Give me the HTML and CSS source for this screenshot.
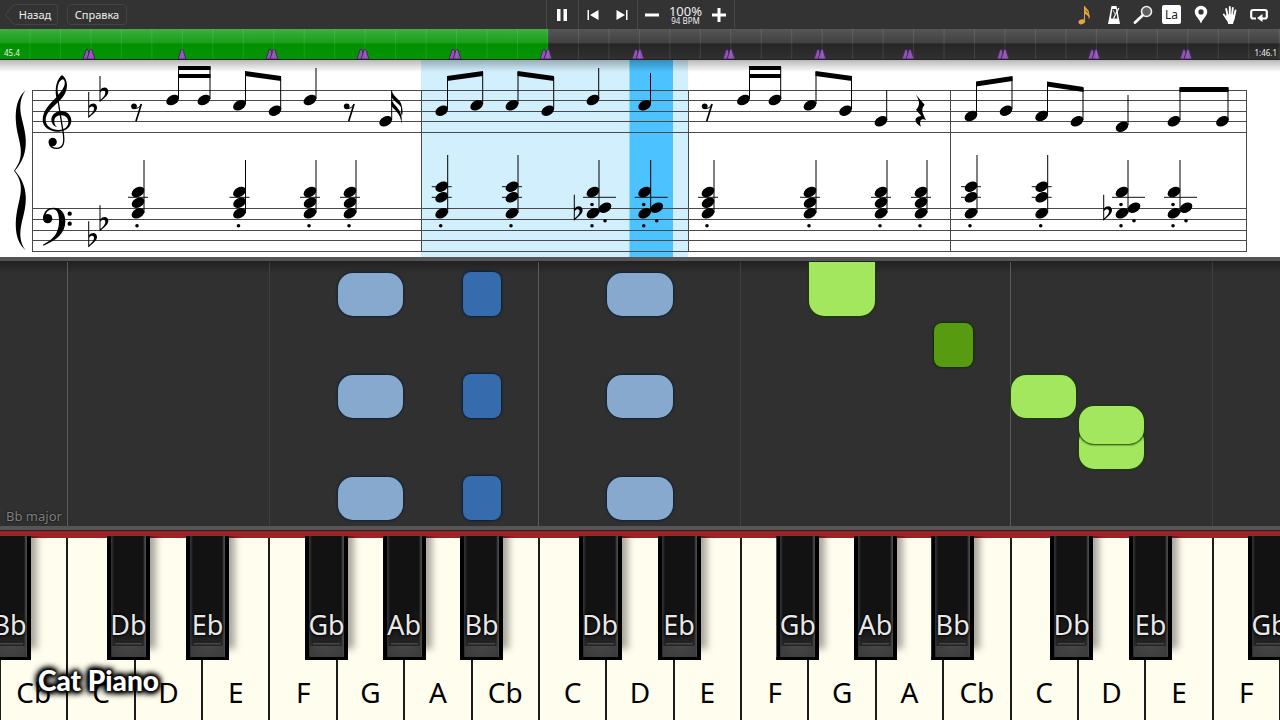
FILE: index.html
```html
<!DOCTYPE html>
<html lang="ru">
<head>
<meta charset="utf-8">
<meta name="viewport" content="width=device-width, initial-scale=1">
<title>Cat Piano</title>
<link rel="stylesheet" href="styles.css">
</head>
<body>
<div class="app">
  <header class="toolbar">
    <nav class="menu">
      <button class="menu-btn back" type="button"><svg class="back-shape" viewBox="0 0 52 22" preserveAspectRatio="none" aria-hidden="true"><path d="M.5 11 7 2.500Q8.500 .5 11 .5H49.500Q51.500 .5 51.500 3V19Q51.500 21.500 49.500 21.500H11Q8.500 21.500 7 19.500Z"/></svg>Назад</button>
      <button class="menu-btn help" type="button">Справка</button>
    </nav>
    <div class="transport">
      <button class="tbtn pause" type="button" aria-label="Pause"><svg width="12" height="14" viewBox="0 0 12 14"><path d="M1 1h3.500v12H1zM7.500 1H11v12H7.500z"/></svg></button>
      <div class="steps">
        <button class="tbtn" type="button" aria-label="Previous"><svg width="12" height="12" viewBox="0 0 12 12"><path d="M.5 1H2v10H.5zM11.500 1v10L3 6z"/></svg></button>
        <button class="tbtn" type="button" aria-label="Next"><svg width="12" height="12" viewBox="0 0 12 12"><path d="M10 1h1.500v10H10zM.5 1v10L9 6z"/></svg></button>
      </div>
      <div class="tempo">
        <button class="tbtn" type="button" aria-label="Slower"><svg width="14" height="14" viewBox="0 0 14 14"><path d="M0 5.500h14v3H0z"/></svg></button>
        <div class="tempo-text"><span class="percent">100%</span><span class="bpm">94 BPM</span></div>
        <button class="tbtn" type="button" aria-label="Faster"><svg width="14" height="14" viewBox="0 0 14 14"><path d="M0 5.500h14v3H0zM5.500 0h3v14h-3z"/></svg></button>
      </div>
    </div>
    <div class="tools">
      <button class="tool" type="button" aria-label="Notes"><svg width="14" height="20" viewBox="0 0 14 20"><g fill="#e8a33c"><ellipse cx="3.800" cy="16.800" rx="3.400" ry="2.400" transform="rotate(-20 3.800 16.800)"/><path d="M6 1H7C7.500 3.500 12 5 11 9 12.500 11 11.800 13 10.500 14.500 11.200 11.500 9.500 10 7 9V16.500H6zM7 4.500C7.500 6.500 9.500 7 10.300 8.500 10.500 6.500 8 6 7 4.500z"/></g></svg></button>
      <button class="tool" type="button" aria-label="Metronome"><svg width="14" height="20" viewBox="0 0 14 20"><path d="M4.500 1h5L13 19H1z"/><path d="M5.300 4h3.700l1.400 9.500H3.900z" fill="#333"/><path d="M6.500 13.500 11.800 3" stroke="#fff" stroke-width="1.300"/><path d="M6 5 8.500 10" stroke="#ccc"/></svg></button>
      <button class="tool" type="button" aria-label="Zoom"><svg width="20" height="20" viewBox="0 0 20 20"><circle cx="13.500" cy="6.500" r="5" fill="#606060" stroke="#eee" stroke-width="1.600"/><path d="M9.500 10.500 2 17.500" stroke="#fff" stroke-width="2.800" stroke-linecap="round"/></svg></button>
      <button class="tool" type="button" aria-label="Note names"><span class="la">La</span></button>
      <button class="tool" type="button" aria-label="Marker"><svg width="14" height="20" viewBox="0 0 14 20"><path fill-rule="evenodd" d="M7 18.500C5.500 14 .8 11 .8 7A6.200 6.200 0 0 1 13.200 7C13.200 11 8.500 14 7 18.500zM7 4.300a2.600 2.600 0 1 0 0 5.200 2.600 2.600 0 0 0 0-5.200z"/></svg></button>
      <button class="tool" type="button" aria-label="Hands"><svg width="16" height="20" viewBox="0 0 16 20"><g fill="none" stroke="#fff" stroke-width="1.900" stroke-linecap="round"><path d="M5.700 11 4.200 4M7.800 10V2M10 10 10.800 3M12 12 13.500 5.500M5 14 1.800 9.500"/></g><path d="M4.500 9.500H12L13 12c-.3 3-1.500 4-2 7H6.200C6 16.500 4.500 15.500 3.500 13.500z"/></svg></button>
      <button class="tool" type="button" aria-label="Loop"><svg width="18" height="14" viewBox="0 0 18 14"><path d="M6 10.500H3.200Q1.200 10.500 1.200 8.500V4Q1.200 2 3.200 2H14.800Q16.800 2 16.800 4V8.500Q16.800 10.500 14.800 10.500H12" fill="none" stroke="#fff" stroke-width="2.200"/><path d="M12.500 6v8L7 10z"/></svg></button>
    </div>
  </header>

  <section class="timeline" aria-label="Timeline">
    <div class="played"></div>
    <svg class="markers" viewBox="0 0 1280 30" preserveAspectRatio="none" aria-hidden="true">
      <defs>
        <path id="mk" d="M-4 30-1 21Q0 19 1 21L4 30Z" fill="#8f55b5" stroke="#492661" stroke-width="1"/>
        <g id="mk2"><use href="#mk" x="-2"/><use href="#mk" x="2"/></g>
      </defs>
      <use href="#mk2" x="89"/><use href="#mk" x="182"/><use href="#mk2" x="272"/><use href="#mk2" x="363"/><use href="#mk2" x="455"/><use href="#mk2" x="546"/><use href="#mk2" x="638"/><use href="#mk2" x="729"/><use href="#mk2" x="820"/><use href="#mk2" x="908"/><use href="#mk2" x="1003"/><use href="#mk2" x="1094"/><use href="#mk2" x="1186"/>
    </svg>
    <span class="time">45.4</span>
    <span class="time">1:46.1</span>
  </section>

  <section class="score" aria-label="Score">
    <svg class="sheet" viewBox="0 60 1280 197" role="img" aria-label="Sheet music">
      <defs>
        <ellipse id="h" rx="6.800" ry="4.700" transform="rotate(-30)"/>
        <g id="flat" transform="scale(.3333)"><path fill-rule="evenodd" d="M-1.500-58H1.500V-17C8-26 25-26 25-11 25 0 10 10 0 20L-1.500 18ZM1.500-9V13C8 7 16 0 16-8 16-17 6-16 1.500-9Z"/></g>
        <g id="rest8" transform="scale(.3333)"><circle r="8.500"/><path d="M0 6Q14 9 22-7" fill="none" stroke="#000" stroke-width="3"/><path d="M22-7 6 45" stroke="#000" stroke-width="5"/></g>
        <g id="ca"><path d="M6 160V213" class="st"/><path d="M-10 197.300H10" class="ld"/><use href="#h" y="192"/><use href="#h" y="202.700"/><use href="#h" y="213.300"/><circle cx="-1" cy="225.700" r="1.800"/></g>
        <g id="cb"><path d="M6 155V213" class="st"/><path d="M-10 186.700H10M-10 197.300H10" class="ld"/><use href="#h" y="186.700"/><use href="#h" y="197.300"/><use href="#h" y="213.300"/><circle cx="-1" cy="225.700" r="1.800"/></g>
        <g id="cc"><path d="M6 160V213" class="st"/><path d="M-10 197.300H23" class="ld"/><use href="#h" y="192"/><use href="#h" y="213.300"/><use href="#h" x="12" y="207.700"/><circle cx="-1" cy="204.500" r="1.800"/><circle cx="-1" cy="225.700" r="1.800"/><circle cx="12" cy="220.700" r="1.800"/></g>
      </defs>
      <rect x="421" y="60" width="267" height="197" fill="#d2effd"/>
      <rect x="629.500" y="60" width="43.500" height="197" fill="#4cc2ff"/>
      <path class="staff" d="M32 90.500H1247M32 100.500H1247M32 111.500H1247M32 121.500H1247M32 132.500H1247M32 208.500H1247M32 219.500H1247M32 230.500H1247M32 240.500H1247M32 251.500H1247M32.500 90V252M421.500 90V252M688.500 90V252M950.500 90V252M1246.500 90V252"/>
      <g transform="translate(0 58) scale(.3333)">
        <path d="M77 97C59 120 58 150 65 180 73 215 97 280 45 338 97 396 73 460 65 495 58 526 59 554 77 577 38 545 46 480 54 445 63 405 72 375 42 338 72 300 63 270 54 230 46 195 38 130 77 97Z"/>
        <path fill-rule="evenodd" d="M186 51C172 62 163 88 169 118 150 137 128 158 128 186 128 208 150 222 176 221 200 220 214 205 214 187 213 170 200 159 184 159 166 160 154 171 154 185 155 197 161 205 172 208 165 202 162 196 163 188 164 177 173 172 184 172 197 172 205 181 205 193 205 208 192 216 176 216 155 216 138 205 137 186 137 166 157 148 175 132 192 116 201 100 201 80 200 67 195 57 186 51ZM189 64C196 68 196 80 190 89 186 97 180 104 175 110 170 92 174 68 189 64Z"/>
        <path d="M172 114 189 220C195 255 190 270 172 271 160 271 150 265 148 256" fill="none" stroke="#000" stroke-width="4"/>
        <circle cx="158" cy="252" r="12.500"/>
        <path d="M129 482C130 458 145 449 160 449 182 449 196 463 196 490 196 525 170 548 130 563L129 560C160 545 177 525 177 490 177 468 172 454 158 454 145 454 138 463 137 474Z"/>
        <circle cx="143" cy="482" r="14"/><circle cx="209" cy="467" r="6.500"/><circle cx="209" cy="497" r="6.500"/>
      </g>
      <use href="#flat" x="88.700" y="111.300"/><use href="#flat" x="100" y="95.300"/><use href="#flat" x="88.700" y="240.700"/><use href="#flat" x="100" y="224.700"/><use href="#flat" x="574.300" y="214"/><use href="#flat" x="1103.700" y="214"/>
      <use href="#rest8" x="134" y="106.300"/><use href="#rest8" x="346.700" y="106.300"/><use href="#rest8" x="704.700" y="106.300"/>
      <path transform="translate(690 58) scale(.3333)" d="M678 110 704 140C694 152 694 160 708 186 694 180 686 188 693 206 672 194 670 176 694 174L678 155C690 142 690 132 678 110Z"/>

      <path class="st" d="M178.500 67V99M210 67V99M245.500 72V104M280.700 77V109M316 68V99M391.700 90V120M447.500 77V109M482.700 72V104M518 72V104M553.700 77V109M598.700 68V99M650.500 73V104M749.500 67V99M780.700 67V99M816 72V104M851.500 77V109M886.700 90V120M976.500 82V115M1012 77V109M1047.500 82V115M1083 88V120M1128 95V125M1180 88V120M1228 88V120"/>
      <path d="M178 66H210.500V70H178ZM178 74H210.500V78H178ZM749 66H781V70H749ZM749 74H781V78H749ZM245 71 281 76V81L245 76ZM447 76 483 71V76L447 81ZM517.500 71 554 76V81L517.500 76ZM815.500 71 852 76V81L815.500 76ZM976 81.500 1012.500 76V81L976 86.500ZM1047 81.500 1083.500 87V92L1047 86.500ZM1179.500 87H1228.500V92H1179.500Z"/>
      <path d="M391.500 90C393 98 403 99 402 110 401 104 394 102 391.500 97ZM391.500 99C393 106 404 109 401.500 124 401 113 394 110 391.500 106ZM401 105Q403.500 110 402 116L401 113Z"/>
      <use href="#h" x="172.700" y="100"/><use href="#h" x="204" y="100"/><use href="#h" x="239.500" y="105.300"/><use href="#h" x="275" y="110.700"/><use href="#h" x="310" y="100"/><use href="#h" x="385.700" y="121.300"/>
      <use href="#h" x="441.700" y="110.700"/><use href="#h" x="476.700" y="105.300"/><use href="#h" x="512" y="105.300"/><use href="#h" x="547.700" y="110.700"/><use href="#h" x="593" y="100"/><use href="#h" x="644.700" y="105.300"/>
      <use href="#h" x="743.500" y="100"/><use href="#h" x="775" y="100"/><use href="#h" x="810" y="105.300"/><use href="#h" x="845.500" y="110.700"/><use href="#h" x="881" y="121.300"/>
      <use href="#h" x="971" y="116"/><use href="#h" x="1006" y="110.700"/><use href="#h" x="1041.700" y="116"/><use href="#h" x="1077" y="121.300"/><use href="#h" x="1122" y="126.700"/><use href="#h" x="1174" y="121.300"/><use href="#h" x="1222.500" y="121.300"/>

      <use href="#ca" x="138"/><use href="#ca" x="239.500"/><use href="#ca" x="310"/><use href="#ca" x="350"/>
      <use href="#cb" x="441.700"/><use href="#cb" x="512"/><use href="#cc" x="593"/><use href="#cc" x="644.700"/>
      <use href="#ca" x="708"/><use href="#ca" x="810"/><use href="#ca" x="881"/><use href="#ca" x="921"/>
      <use href="#cb" x="971"/><use href="#cb" x="1041.700"/><use href="#cc" x="1122"/><use href="#cc" x="1174"/>
    </svg>
  </section>

  <div class="divider"></div>

  <section class="roll" aria-label="Falling notes">
    <i class="guide" style="left:5.200%"></i><i class="guide soft" style="left:21%"></i><i class="guide" style="left:42.050%"></i><i class="guide soft" style="left:57.850%"></i><i class="guide" style="left:78.900%"></i><i class="guide soft" style="left:94.700%"></i>
    <i class="note blue" style="left:26.400%;top:11px"></i><i class="note blue" style="left:26.400%;top:113px"></i><i class="note blue" style="left:26.400%;top:215px"></i>
    <i class="note navy" style="left:36.170%;top:10px"></i><i class="note navy" style="left:36.170%;top:112px"></i><i class="note navy" style="left:36.170%;top:214px"></i>
    <i class="note blue" style="left:47.450%;top:11px"></i><i class="note blue" style="left:47.450%;top:113px"></i><i class="note blue" style="left:47.450%;top:215px"></i>
    <i class="note lime" style="left:63.240%;top:-14px;height:68px"></i>
    <i class="note green" style="left:73%;top:61px"></i>
    <i class="note lime" style="left:79%;top:113px"></i>
    <i class="note lime" style="left:84.280%;top:164px"></i>
    <i class="note lime" style="left:84.280%;top:144px;height:38px"></i>
    <span class="key-name">Bb major</span>
  </section>

  <div class="divider"></div>

  <section class="keyboard" aria-label="Piano">
    <div class="whites">
      <button type="button">Cb</button><button type="button">C</button><button type="button">D</button><button type="button">E</button><button type="button">F</button><button type="button">G</button><button type="button">A</button><button type="button">Cb</button><button type="button">C</button><button type="button">D</button><button type="button">E</button><button type="button">F</button><button type="button">G</button><button type="button">A</button><button type="button">Cb</button><button type="button">C</button><button type="button">D</button><button type="button">E</button><button type="button">F</button>
    </div>
    <button class="black" type="button" style="left:-0.940%">Bb</button>
    <button class="black" type="button" style="left:8.360%">Db</button>
    <button class="black" type="button" style="left:14.530%">Eb</button>
    <button class="black" type="button" style="left:23.830%">Gb</button>
    <button class="black" type="button" style="left:29.900%">Ab</button>
    <button class="black" type="button" style="left:35.940%">Bb</button>
    <button class="black" type="button" style="left:45.200%">Db</button>
    <button class="black" type="button" style="left:51.370%">Eb</button>
    <button class="black" type="button" style="left:60.650%">Gb</button>
    <button class="black" type="button" style="left:66.720%">Ab</button>
    <button class="black" type="button" style="left:72.750%">Bb</button>
    <button class="black" type="button" style="left:82.040%">Db</button>
    <button class="black" type="button" style="left:88.200%">Eb</button>
    <button class="black" type="button" style="left:97.500%">Gb</button>
    <span class="watermark">Cat Piano</span>
  </section>
</div>
</body>
</html>
```
FILE: styles.css
```css
* { box-sizing: border-box; }
body {
  margin: 0;
  background: #303030;
  font-family: "Noto Sans", "Open Sans", sans-serif;
}
button {
  margin: 0;
  padding: 0;
  border: 0;
  background: none;
  color: inherit;
  font: inherit;
}
svg { display: block; flex: none; }
.app {
  display: flex;
  flex-direction: column;
  min-height: 100vh;
  overflow: hidden;
}

/* Toolbar */
.toolbar {
  display: grid;
  grid-template-columns: 1fr auto 1fr;
  height: 29px;
  background: #333;
  color: #eee;
}
.menu {
  display: flex;
  align-items: center;
  gap: 9px;
  padding-left: 5px;
}
.menu-btn {
  position: relative;
  height: 21px;
  font-size: 11px;
  line-height: 20px;
}
.back { width: 53px; padding-left: 7px; }
.back-shape {
  position: absolute;
  inset: 0;
  width: 100%;
  height: 100%;
  fill: none;
  stroke: #444;
}
.help {
  width: 60px;
  border: 1px solid #444;
  border-radius: 4px;
}
.transport {
  display: flex;
  border: solid #484848;
  border-width: 0 1px;
}
.tbtn {
  display: flex;
  align-items: center;
  justify-content: center;
  width: 29px;
}
.tbtn svg, .tool svg { fill: #fff; }
.pause { width: 31px; }
.steps {
  display: flex;
  border: solid #484848;
  border-width: 0 1px;
}
.tempo { display: flex; }
.tempo-text {
  display: flex;
  flex-direction: column;
  align-items: center;
  width: 38px;
  padding-top: 4px;
}
.percent { font-size: 13px; line-height: 14px; }
.bpm { font-size: 8px; line-height: 6px; }
.tools {
  display: flex;
  justify-content: flex-end;
  padding-right: 7px;
}
.tool {
  display: flex;
  align-items: center;
  justify-content: center;
  width: 29px;
}
.la {
  width: 19px;
  height: 19px;
  border-radius: 2px;
  background: #fff;
  color: #222;
  font-size: 12px;
  line-height: 20px;
}

/* Timeline */
.timeline {
  position: relative;
  display: flex;
  justify-content: space-between;
  align-items: flex-end;
  height: 31px;
  padding: 0 3px 1px 4px;
  border-bottom: 1px solid #222;
  background: linear-gradient(#555, #424242 45%, #262626 50%, #303030);
  color: #eee;
}
.timeline::after {
  content: "";
  position: absolute;
  inset: 0;
  background: linear-gradient(90deg, transparent calc(100% - 1px), rgba(255, 255, 255, .1) 0) 0 0 / calc(100% / 42) 100%;
}
.played {
  position: absolute;
  inset: 0 auto 0 0;
  width: 42.8%;
  background: linear-gradient(#3fae3f, #18a018 45%, #009000 52%, #049504);
}
.markers {
  position: absolute;
  inset: 0;
  width: 100%;
  height: 100%;
}
.time { position: relative; font-size: 8px; line-height: 11px; }

/* Score */
.score {
  position: relative;
  background: #fff;
}
.score::after {
  content: "";
  position: absolute;
  inset: 0 0 auto;
  height: 12px;
  background: linear-gradient(rgba(0, 0, 0, .28), transparent);
}
.sheet { width: 100%; height: auto; }
.staff { fill: none; stroke: #4a4a4a; stroke-width: 1; }
.st { fill: none; stroke: #000; stroke-width: 1; }
.ld { fill: none; stroke: #111; stroke-width: 1; }
.divider {
  position: relative;
  z-index: 1;
  height: 5px;
  border-bottom: 1px solid #222;
  background: #555;
}

/* Falling notes */
.roll {
  position: relative;
  flex: 1 0 264px;
  overflow: hidden;
  background: linear-gradient(#222, #303030 12px);
}
.guide {
  position: absolute;
  top: 0;
  bottom: 0;
  width: 1px;
  background: #5a5a5a;
}
.soft { background: #3e3e3e; }
.note {
  position: absolute;
  width: 5.1%;
  height: 43px;
  border-radius: 15px;
}
.blue { background: #87a9cd; box-shadow: 0 0 2px 1px #10243a; }
.navy { width: 3%; height: 44px; border-radius: 8px; background: #366bad; box-shadow: 0 0 2px 1px #0c2036; }
.lime { background: #a2e75d; box-shadow: 0 0 2px 1px #1a3c08; }
.green { width: 3%; height: 44px; border-radius: 8px; background: #569b10; box-shadow: 0 0 2px 1px #122c06; }
.key-name {
  position: absolute;
  left: 6px;
  bottom: 2px;
  color: #808080;
  font-size: 13px;
  line-height: 16px;
  text-shadow: 0 0 2px #000;
}

/* Keyboard */
.keyboard {
  position: relative;
  height: 189px;
  border-top: 7px solid #9c2226;
}
.whites {
  display: grid;
  grid-template-columns: repeat(19, minmax(0, 1fr));
  height: 100%;
}
.whites button {
  display: flex;
  align-items: flex-end;
  justify-content: center;
  padding-bottom: 8px;
  border: solid #1c1c1c;
  border-width: 0 1px;
  background: #fffdee;
  color: #000;
  font-size: 28px;
  line-height: 40px;
}
.black {
  position: absolute;
  top: -2px;
  display: flex;
  justify-content: center;
  width: 43px;
  height: 124px;
  padding-top: 66px;
  border: solid #000;
  border-width: 0 4px 3px;
  background:
    linear-gradient(#505050, #2a2a2a) 50% 107px / 27px 2px no-repeat,
    radial-gradient(ellipse at 50% 0, #474747, #3a3a3a) 50% 110px / 33px 11px no-repeat,
    linear-gradient(90deg, #303030 1px, transparent 3px calc(100% - 3px), #484848 calc(100% - 1px)),
    linear-gradient(#121212 60%, #1c1c1c 80%, #2c2c2c);
  box-shadow: 7px -10px 7px -1px rgba(0, 0, 0, .34);
  clip-path: inset(0 -20px 0 0);
  color: #e8e8e8;
  font-size: 27px;
  line-height: 46px;
  text-shadow: 0 0 3px #000, 0 0 3px #000;
}
.watermark {
  position: absolute;
  left: 38px;
  bottom: 24px;
  color: #fff;
  font-family: Lato, "Noto Sans", sans-serif;
  font-size: 28px;
  font-weight: 900;
  line-height: 32px;
  text-shadow: 0 0 3px #000, 0 0 3px #000, 0 0 5px #000, 0 0 5px #000, 0 0 7px #000, 0 0 7px #000, 0 0 9px #000, 0 0 9px #000;
}
```
